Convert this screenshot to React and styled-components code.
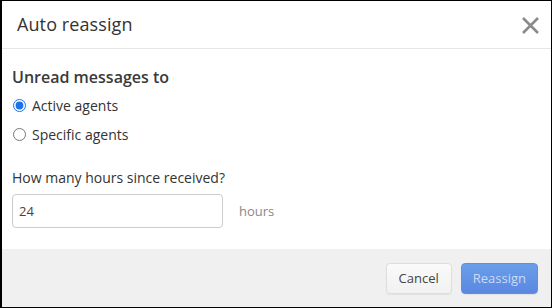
import React, { useState } from 'react';
import styled, { createGlobalStyle } from 'styled-components';

const GlobalStyle = createGlobalStyle`
    html, body {
        margin: 0;
        padding: 0;
        background: #fff;
    }
    * {
        box-sizing: border-box;
    }
`;

const App = () => {
    const [target, setTarget] = useState('active');
    const [hours, setHours] = useState('24');

    return (
        <>
            <GlobalStyle />
            <Modal>
                <Header>
                    <Title>Auto reassign</Title>
                    <CloseButton aria-label="Close">
                        <svg width="19" height="19" viewBox="0 0 19 19">
                            <path d="M2 2 L17 17 M17 2 L2 17" stroke="#8a8a8a" strokeWidth="2.6" strokeLinecap="butt" />
                        </svg>
                    </CloseButton>
                </Header>

                <Body>
                    <SectionTitle>Unread messages to</SectionTitle>
                    <RadioRow>
                        <Radio
                            type="radio"
                            name="target"
                            checked={target === 'active'}
                            onChange={() => setTarget('active')}
                        />
                        Active agents
                    </RadioRow>
                    <RadioRow>
                        <Radio
                            type="radio"
                            name="target"
                            checked={target === 'specific'}
                            onChange={() => setTarget('specific')}
                        />
                        Specific agents
                    </RadioRow>

                    <FieldLabel>How many hours since received?</FieldLabel>
                    <FieldRow>
                        <HoursInput value={hours} onChange={e => setHours(e.target.value)} />
                        <Unit>hours</Unit>
                    </FieldRow>
                </Body>

                <Footer>
                    <Button>Cancel</Button>
                    <Button primary>Reassign</Button>
                </Footer>
            </Modal>
        </>
    );
};

export default App;

const Modal = styled.div`
    width: 552px;
    height: 308px;
    border: 1px solid #000;
    border-left-width: 2px;
    display: flex;
    flex-direction: column;
    background: #fff;
    font-family: "Open Sans", "Noto Sans", sans-serif;
    color: #333;
`;

const Header = styled.div`
    height: 48px;
    flex-shrink: 0;
    display: flex;
    align-items: center;
    justify-content: space-between;
    padding: 0 10px 0 15px;
    border-bottom: 1px solid #e6e6e6;
`;

const Title = styled.h4`
    margin: 0;
    font-size: 18px;
    font-weight: 400;
    color: #333;
    letter-spacing: 0.1px;
    padding-bottom: 1px;
`;

const CloseButton = styled.button`
    border: none;
    background: none;
    padding: 0;
    width: 21px;
    height: 21px;
    display: flex;
    align-items: center;
    justify-content: center;
    cursor: pointer;
    margin-top: 1px;
`;

const Body = styled.div`
    flex: 1;
    padding: 17px 10px 0 10px;
`;

const SectionTitle = styled.div`
    font-size: 16px;
    font-weight: 600;
    color: #3a3a3a;
    line-height: 22px;
    margin-bottom: 3px;
`;

const RadioRow = styled.label`
    display: flex;
    align-items: center;
    gap: 6px;
    font-size: 14px;
    line-height: 20px;
    height: 29px;
    color: #333;
    cursor: pointer;
`;

const Radio = styled.input`
    width: 13px;
    height: 13px;
    margin: 0 0 0 1px;
    accent-color: #1a73e8;
`;

const FieldLabel = styled.div`
    font-size: 14px;
    line-height: 20px;
    color: #333;
    margin-top: 19px;
`;

const FieldRow = styled.div`
    display: flex;
    align-items: center;
    gap: 16px;
    margin-top: 6px;
`;

const HoursInput = styled.input`
    width: 211px;
    height: 34px;
    border: 1px solid #ccc;
    border-radius: 4px;
    padding: 0 6px;
    font-family: "Open Sans", "Noto Sans", sans-serif;
    font-size: 13px;
    color: #444;
    outline: none;
`;

const Unit = styled.span`
    font-size: 13px;
    color: #888;
`;

const Footer = styled.div`
    height: 58px;
    flex-shrink: 0;
    background: #f0f0f0;
    display: flex;
    align-items: center;
    justify-content: flex-end;
    gap: 9px;
    padding: 0 13px 0 0;
`;

const Button = styled.button`
    height: 31px;
    padding: 0 ${p => (p.primary ? '11px' : '12px')};
    border-radius: 4px;
    font-family: "Open Sans", "Noto Sans", sans-serif;
    font-size: 13px;
    cursor: pointer;
    border: 1px solid ${p => (p.primary ? '#5d8fe4' : '#dedede')};
    background: ${p => (p.primary
        ? 'linear-gradient(#6a9eea, #5a88e0)'
        : 'linear-gradient(#fafafa, #f1f1f1)')};
    color: ${p => (p.primary ? '#c9dbf7' : '#444')};
    box-shadow: 0 1px 1px rgba(0, 0, 0, 0.06);
`;
